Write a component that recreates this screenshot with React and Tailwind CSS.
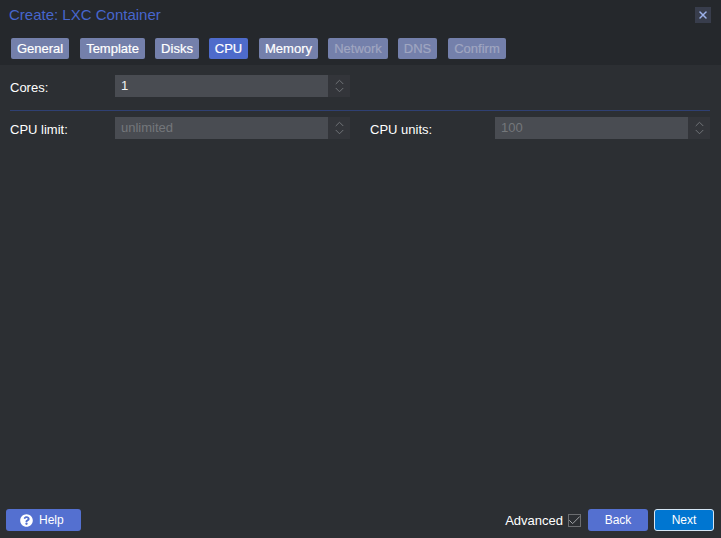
import React from "react";
import { X, ChevronUp, ChevronDown, Check } from "lucide-react";
import { FaQuestionCircle } from "react-icons/fa";

const tabs = [
  { label: "General", width: "w-[58px]" },
  { label: "Template", width: "w-[65px]" },
  { label: "Disks", width: "w-[44px]" },
  { label: "CPU", width: "w-[39px]", active: true },
  { label: "Memory", width: "w-[59px]" },
  { label: "Network", width: "w-[60px]", disabled: true },
  { label: "DNS", width: "w-[39px]", disabled: true },
  { label: "Confirm", width: "w-[58px]", disabled: true },
];

const Spinner = () => (
  <div className="w-[22px] h-full bg-[#33353a] flex flex-col items-center justify-center text-[#74777c]">
    <ChevronUp size={17} strokeWidth={1.6} className="-mb-[3px]" />
    <ChevronDown size={17} strokeWidth={1.6} className="-mt-[3px]" />
  </div>
);

const NumberField = ({ value, disabled, width }) => (
  <div className="flex h-[22px]">
    <div
      className={`${width} bg-[#494c52] pl-[6px] leading-[21px] ${
        disabled ? "text-[#74777b]" : "text-[#f2f2f2]"
      }`}
    >
      {value}
    </div>
    <Spinner />
  </div>
);

export default function App() {
  return (
    <div className="w-[721px] h-[538px] flex flex-col bg-[#2c2f33] text-[13px] text-white font-['Liberation_Sans',Arial,sans-serif] overflow-hidden">
      {/* Title & tabs */}
      <div className="h-[65px] bg-[#25282c] shrink-0">
        <div className="h-[38px] flex justify-between pl-[9px] pr-[10px] pt-[7px]">
          <span className="text-[15px] leading-[16px] text-[#4766cc]">Create: LXC Container</span>
          <div className="w-4 h-4 bg-[#383d4c] flex items-center justify-center text-[#9db2ea]">
            <X size={12} strokeWidth={3} />
          </div>
        </div>
        <div className="flex pl-[11px]">
          {tabs.map((tab, index) => (
            <div
              key={tab.label}
              className={`${tab.width} h-[21px] rounded-[2px] flex items-center justify-center [-webkit-text-stroke:0.2px_currentColor] ${
                index === 0 ? "" : tab.label === "Template" || tab.label === "Memory" || tab.label === "Confirm" ? "ml-[11px]" : "ml-[10px]"
              } ${tab.active ? "bg-[#4e6bcb]" : "bg-[#7480ab]"} ${
                tab.disabled ? "text-[#a0a6c1]" : "text-white"
              }`}
            >
              {tab.label}
            </div>
          ))}
        </div>
      </div>

      {/* Form */}
      <div className="flex-1 pl-[10px] pr-[11px] pt-[10px]">
        <div className="flex items-center h-[22px]">
          <span className="w-[105px] pt-[3px]">Cores:</span>
          <NumberField value="1" width="w-[213px]" />
        </div>
        <div className="h-px bg-[#2f4073] mt-[13px] mb-[6px]" />
        <div className="flex items-center h-[22px]">
          <span className="w-[105px] pt-[3px]">CPU limit:</span>
          <NumberField value="unlimited" disabled width="w-[213px]" />
          <span className="ml-[20px] w-[125px] pt-[3px]">CPU units:</span>
          <NumberField value="100" disabled width="w-[193px]" />
        </div>
      </div>

      {/* Footer */}
      <div className="h-[22px] mb-[7px] mx-[7px] flex items-center shrink-0">
        <button className="w-[75px] h-[22px] -ml-px rounded-[3px] bg-[#5470d0] flex items-center pl-[14px] gap-[6px] text-white text-[12px]">
          <FaQuestionCircle size={13} />
          Help
        </button>
        <div className="flex-1" />
        <span className="pt-[2px]">Advanced</span>
        <div className="w-[13px] h-[13px] ml-[5px] border border-[#6b6d70] flex items-center justify-center text-[#a0a2a5]">
          <Check size={15} strokeWidth={1.6} className="shrink-0" />
        </div>
        <button className="w-[60px] h-[22px] ml-[7px] rounded-[3px] bg-[#5470d0] text-white text-[12px]">Back</button>
        <button className="w-[60px] h-[22px] ml-[6px] rounded-[3px] bg-[#0076d1] border border-[#d5e6f5] text-white text-[12px]">Next</button>
      </div>
    </div>
  );
}
